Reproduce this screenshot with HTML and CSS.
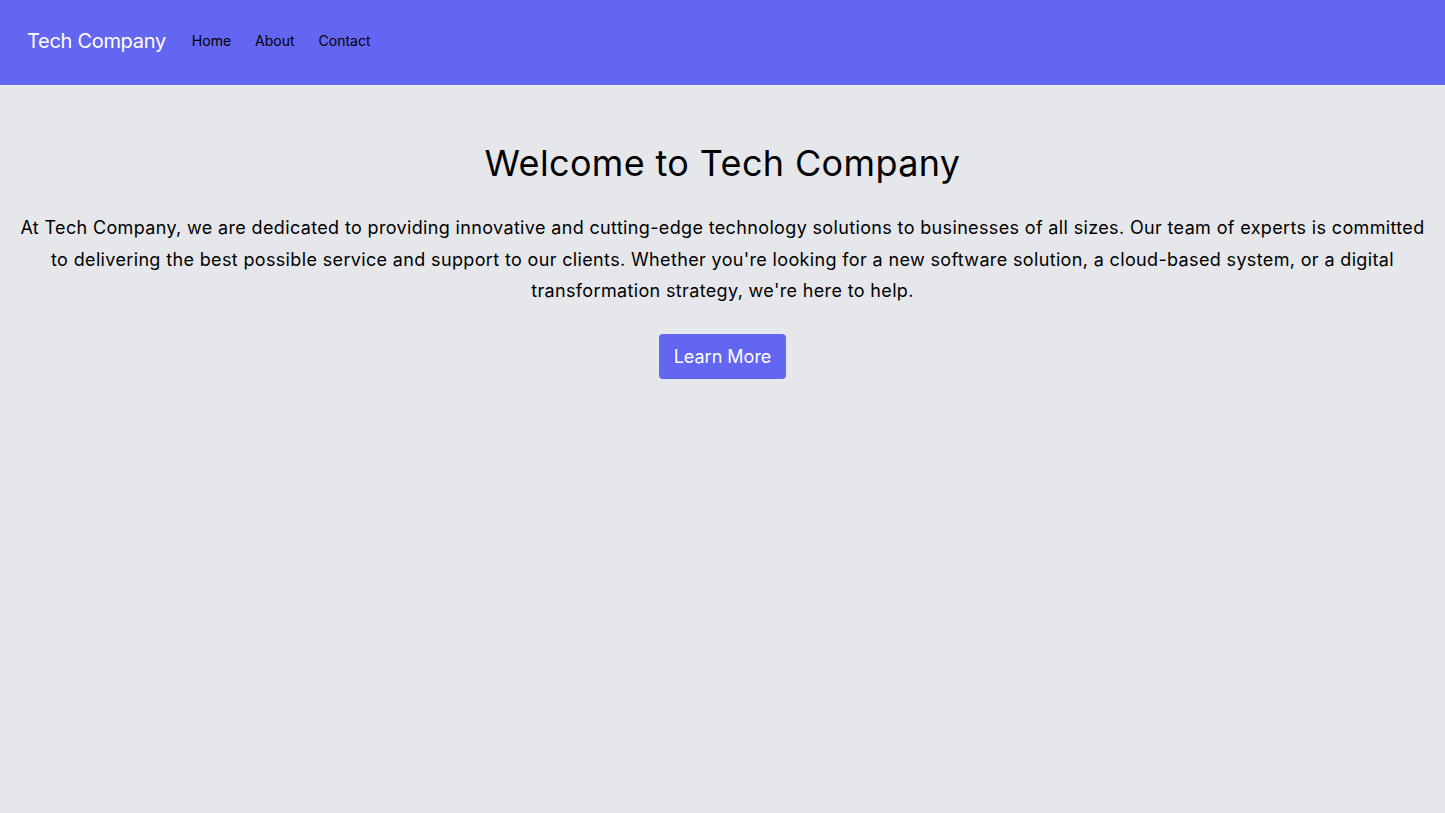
FILE: index.html
```html
<!DOCTYPE html>
<html lang="en">
<head>
  <meta charset="UTF-8">
  <title>Tech Company</title>
  <link rel="stylesheet" href="styles.css">
</head>
<body>

  <nav class="navbar">
    <span class="brand">Tech Company</span>
    <div class="nav-links">
      <a href="#">Home</a>
      <a href="#">About</a>
      <a href="#">Contact</a>
    </div>
  </nav>

  <main class="hero">
    <h1>Welcome to Tech Company</h1>
    <p>At Tech Company, we are dedicated to providing innovative and cutting-edge technology solutions to businesses of all sizes. Our team of experts is committed to delivering the best possible service and support to our clients. Whether you're looking for a new software solution, a cloud-based system, or a digital transformation strategy, we're here to help.</p>
    <a href="#" class="btn">Learn More</a>
  </main>

</body>
</html>
```
FILE: styles.css
```css
body {
  margin: 0;
  font-family: Inter, "Liberation Sans", sans-serif;
  background-color: #e5e7eb;
  color: #000;
}

.navbar {
  display: flex;
  align-items: center;
  height: 85px;
  padding: 0 27px;
  background-color: #6366f1;
}

.brand {
  color: #fff;
  font-size: 20px;
  letter-spacing: -0.015em;
  margin-right: 26px;
  padding-bottom: 3px;
}

.nav-links {
  display: flex;
  gap: 24px;
  padding-bottom: 5px;
}

.nav-links a {
  color: #000;
  font-size: 14px;
  text-decoration: none;
}

.hero {
  padding: 58px 12px 0;
  text-align: center;
  letter-spacing: 0.022em;
}

.hero h1 {
  font-size: 36px;
  font-weight: 400;
  line-height: 40px;
  margin: 0 0 29px;
}

.hero p {
  font-size: 18px;
  line-height: 31.5px;
  margin: 0 0 27px;
}

.btn {
  display: inline-block;
  padding: 8px 15px;
  font-size: 18px;
  line-height: 29px;
  color: #fff;
  background-color: #6366f1;
  border-radius: 4px;
  text-decoration: none;
  letter-spacing: 0;
}
```
